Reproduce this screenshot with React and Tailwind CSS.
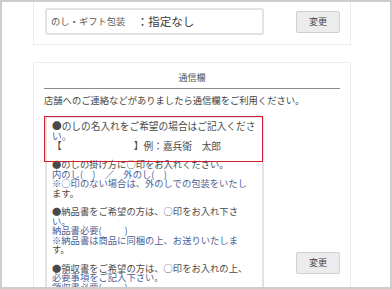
import React from "react";

const DARK = "text-[#4a4a4a]";
const BLUE = "text-[#4a5f96]";

function Line({ children, blue, big }) {
  return (
    <div
      className={
        "whitespace-pre " +
        (big ? "text-[9.7px] leading-[10px] " : "text-[9.3px] leading-[9.4px] ") +
        (blue ? BLUE : DARK)
      }
    >
      {children}
    </div>
  );
}

export default function App() {
  return (
    <div className="w-[392px] h-[289px] overflow-hidden bg-white border-2 border-[#cdcdcd] font-['Noto_Sans_CJK_JP','Noto_Sans',sans-serif]">
      {/* Card 1 */}
      <div className="ml-[31px] w-[318px] -mt-[10px] border border-[#ececec] pt-[15px] pb-[9px] pl-[11px] flex items-center">
        <div className="w-[219px] h-[27px] border-2 border-[#e2e2e2] rounded-[3px] flex items-center pl-[4px] whitespace-pre">
          <span className="text-[9.3px] text-[#5a5a5a]">のし・ギフト包装　 </span>
          <span className="text-[11.5px] text-[#3a3a3a]">：指定なし</span>
        </div>
        <button className="ml-[32px] w-[44px] h-[22px] border border-[#cfcfcf] bg-[#ececec] text-[9px] text-[#444] rounded-[2px] flex items-center justify-center">
          変更
        </button>
      </div>

      {/* Card 2 */}
      <div className="ml-[31px] w-[318px] mt-[17px] border border-[#ececec] rounded-t-[3px] px-[10px] pt-[9px] h-[260px]">
        <div className="text-center text-[9px] leading-[12px] pb-[4px] border-b border-[#8a8a8a] text-[#555]">
          通信欄
        </div>
        <div className="mt-[5px] text-[9.3px] leading-[12px] text-[#444] whitespace-nowrap">
          店舗へのご連絡などがありましたら通信欄をご利用ください。
        </div>
        <div className="mt-[10px] flex items-start">
          <div className="relative ml-[1px]">
            <div className="w-[219px] h-[240px] border-2 border-[#e2e2e2] rounded-[2px] pt-[3px] pl-[5px] overflow-hidden">
              <Line big>●のしの名入れをご希望の場合はご記入くださ</Line>
              <Line big blue>い。</Line>
              <Line big>{"【　　　　　　　  】例：嘉兵衛　太郎"}</Line>
              <Line> </Line>
              <Line>●のしの掛け方に○印をお入れください。</Line>
              <Line blue>{"内のし(　)　／　外のし(　)"}</Line>
              <Line blue>※○印のない場合は、外のしでの包装をいたし</Line>
              <Line>ます。</Line>
              <Line> </Line>
              <Line>●納品書をご希望の方は、○印をお入れ下さ</Line>
              <Line blue>い。</Line>
              <Line blue>{"納品書必要(　　  )"}</Line>
              <Line blue>※納品書は商品に同梱の上、お送りいたしま</Line>
              <Line>す。</Line>
              <Line> </Line>
              <Line>●領収書をご希望の方は、○印をお入れの上、</Line>
              <Line blue>必要事項をご記入下さい。</Line>
              <Line blue>{"領収書必要(　　  )"}</Line>
            </div>
            <div className="absolute left-[-1px] top-0 w-[219px] h-[46px] border border-[#d02030]" />
          </div>
          <button className="ml-[32px] mt-[136px] w-[44px] h-[22px] border border-[#cfcfcf] bg-[#ececec] text-[9px] text-[#444] rounded-[2px] flex items-center justify-center">
            変更
          </button>
        </div>
      </div>
    </div>
  );
}
